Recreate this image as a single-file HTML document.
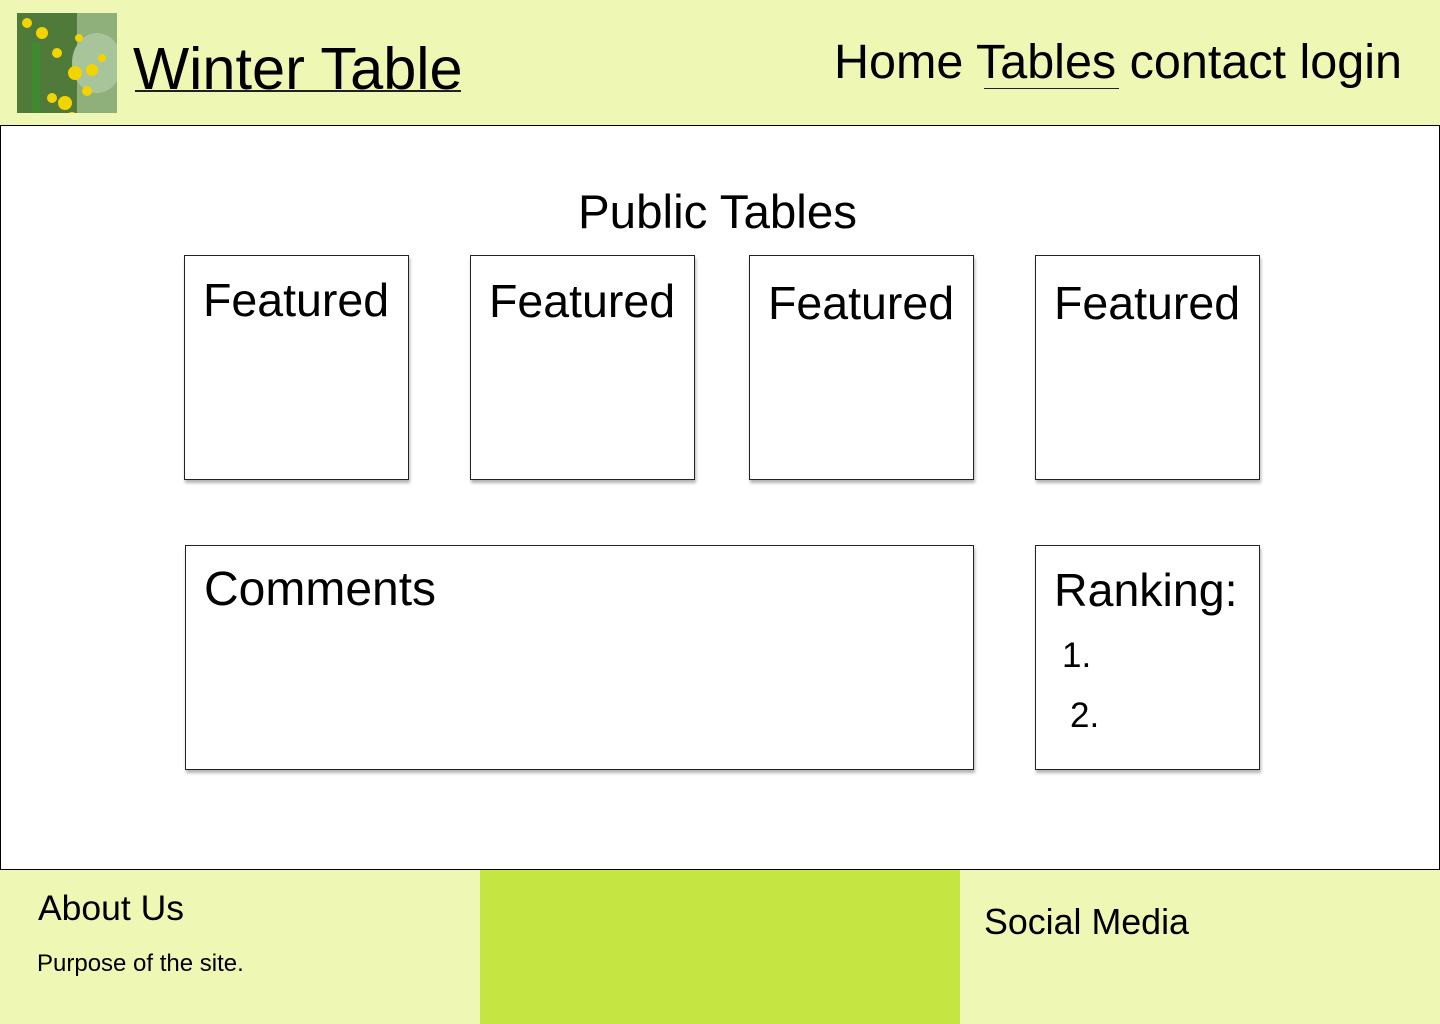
<!DOCTYPE html>
<html><head><style>
*{margin:0;padding:0;box-sizing:border-box}
body{width:1440px;height:1024px;background:#eef7b3;font-family:"Liberation Sans",sans-serif;position:relative;overflow:hidden;color:#000}
.a{position:absolute;white-space:nowrap;line-height:1}
.box{position:absolute;background:#fff;border:1px solid #222;box-shadow:1px 3px 3px rgba(0,0,0,.3)}
.f{font-size:46.5px}
</style></head><body>
<svg class="a" style="left:17px;top:13px" width="100" height="100">
<rect width="100" height="100" fill="#4f7a3a"/>
<rect x="60" y="0" width="40" height="100" fill="#8fb07a"/>
<ellipse cx="80" cy="50" rx="25" ry="30" fill="#a8c49a"/>
<rect x="15" y="30" width="8" height="70" fill="#3f8a2e"/>
<g fill="#f2d400">
<circle cx="10" cy="10" r="5"/><circle cx="25" cy="20" r="6"/><circle cx="40" cy="40" r="5"/><circle cx="58" cy="60" r="7"/><circle cx="75" cy="57" r="6"/><circle cx="48" cy="90" r="7"/><circle cx="55" cy="105" r="6"/><circle cx="35" cy="85" r="5"/><circle cx="70" cy="78" r="5"/><circle cx="62" cy="25" r="4"/><circle cx="85" cy="45" r="4"/>
</g></svg>
<div class="a" style="left:133px;top:39px;font-size:59.5px">Winter Table</div>
<div class="a" style="left:135px;top:90px;width:326px;height:2px;background:#222"></div>
<div class="a" style="left:834px;top:38px;font-size:48.5px">Home Tables contact login</div>
<div class="a" style="left:984px;top:88px;width:135px;height:1px;background:#222"></div>
<div class="a" style="left:0;top:125px;width:1440px;height:745px;background:#fff;border:1px solid #000"></div>
<div class="a" style="left:578px;top:189px;font-size:47.5px">Public Tables</div>
<div class="box" style="left:184px;top:255px;width:225px;height:225px"><div class="a f" style="left:18px;top:21px">Featured</div></div>
<div class="box" style="left:470px;top:255px;width:225px;height:225px"><div class="a f" style="left:18px;top:22px">Featured</div></div>
<div class="box" style="left:749px;top:255px;width:225px;height:225px"><div class="a f" style="left:18px;top:24px">Featured</div></div>
<div class="box" style="left:1035px;top:255px;width:225px;height:225px"><div class="a f" style="left:18px;top:24px">Featured</div></div>
<div class="box" style="left:185px;top:545px;width:789px;height:225px"><div class="a" style="left:18px;top:20px;font-size:48px">Comments</div></div>
<div class="box" style="left:1035px;top:545px;width:225px;height:225px"><div class="a f" style="left:18px;top:21px">Ranking:</div>
<div class="a" style="left:26px;top:92px;font-size:35px">1.</div><div class="a" style="left:34px;top:152px;font-size:35px">2.</div></div>
<div class="a" style="left:480px;top:870px;width:480px;height:154px;background:#c5e543"></div>
<div class="a" style="left:38px;top:891px;font-size:35.5px">About Us</div>
<div class="a" style="left:37px;top:952px;font-size:24px">Purpose of the site.</div>
<div class="a" style="left:984px;top:905px;font-size:35.8px">Social Media</div>
</body></html>
